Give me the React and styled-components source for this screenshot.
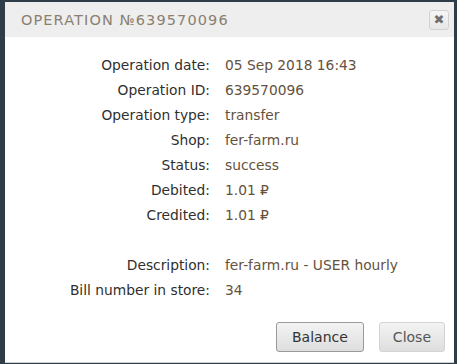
import React from "react";
import styled, { createGlobalStyle } from "styled-components";

const GlobalStyle = createGlobalStyle`
  html, body {
    margin: 0;
    padding: 0;
    background: #2e3d48;
  }
`;

const Page = styled.div`
  width: 457px;
  height: 364px;
  box-sizing: border-box;
  padding: 2px 3px 2px 5px;
`;

const Dialog = styled.div`
  height: 100%;
  background: #fff;
  box-shadow: 0 1px 0 #cfcfcf;
  display: flex;
  flex-direction: column;
`;

const Header = styled.div`
  height: 35px;
  background: #eeeeee;
  display: flex;
  align-items: center;
  justify-content: space-between;
  padding: 0 5px 0 16px;
`;

const Title = styled.h2`
  margin: 0;
  font-family: "DejaVu Sans", sans-serif;
  font-weight: normal;
  font-size: 14.5px;
  letter-spacing: 1.1px;
  color: #8b806f;
`;

const CloseX = styled.button`
  width: 20px;
  height: 20px;
  padding: 0;
  border: 1px solid #d2d2d2;
  border-radius: 3px;
  background: linear-gradient(#f6f6f6, #e6e6e6);
  color: #6f6f6f;
  font-family: "DejaVu Sans", sans-serif;
  font-size: 13px;
  line-height: 18px;
  display: flex;
  align-items: center;
  justify-content: center;
`;

const Body = styled.div`
  flex: 1;
  display: grid;
  grid-template-columns: 205px 1fr;
  column-gap: 15px;
  grid-auto-rows: 25px;
  align-content: start;
  padding-top: 20px;
  font-family: "DejaVu Sans", sans-serif;
  font-size: 13.8px;
`;

const Label = styled.div`
  text-align: right;
  color: #2f2f2f;
`;

const Value = styled.div`
  color: #65523d;
`;

const Spacer = styled.div`
  grid-column: 1 / 3;
`;

const Footer = styled.div`
  display: flex;
  justify-content: flex-end;
  gap: 15px;
  padding: 0 9px 10px 0;
`;

const Button = styled.button`
  height: 30px;
  padding: 0 ${(p) => (p.$primary ? "15px" : "13px")};
  font-family: Tahoma, "DejaVu Sans", sans-serif;
  font-size: 14px;
  border-radius: 3px;
  border: 1px solid ${(p) => (p.$primary ? "#9a9a9a" : "#d3d3d3")};
  background: linear-gradient(#f3f3f3, #dedede);
  color: ${(p) => (p.$primary ? "#333" : "#555")};
`;

const rows = [
  ["Operation date:", "05 Sep 2018 16:43"],
  ["Operation ID:", "639570096"],
  ["Operation type:", "transfer"],
  ["Shop:", "fer-farm.ru"],
  ["Status:", "success"],
  ["Debited:", "1.01 ₽"],
  ["Credited:", "1.01 ₽"],
  null,
  ["Description:", "fer-farm.ru - USER hourly"],
  ["Bill number in store:", "34"],
];

export default function App() {
  return (
    <Page>
      <GlobalStyle />
      <Dialog>
        <Header>
          <Title>OPERATION №639570096</Title>
          <CloseX>✖</CloseX>
        </Header>
        <Body>
          {rows.map((r, i) =>
            r ? (
              <React.Fragment key={i}>
                <Label>{r[0]}</Label>
                <Value>{r[1]}</Value>
              </React.Fragment>
            ) : (
              <Spacer key={i} />
            )
          )}
        </Body>
        <Footer>
          <Button $primary>Balance</Button>
          <Button>Close</Button>
        </Footer>
      </Dialog>
    </Page>
  );
}
